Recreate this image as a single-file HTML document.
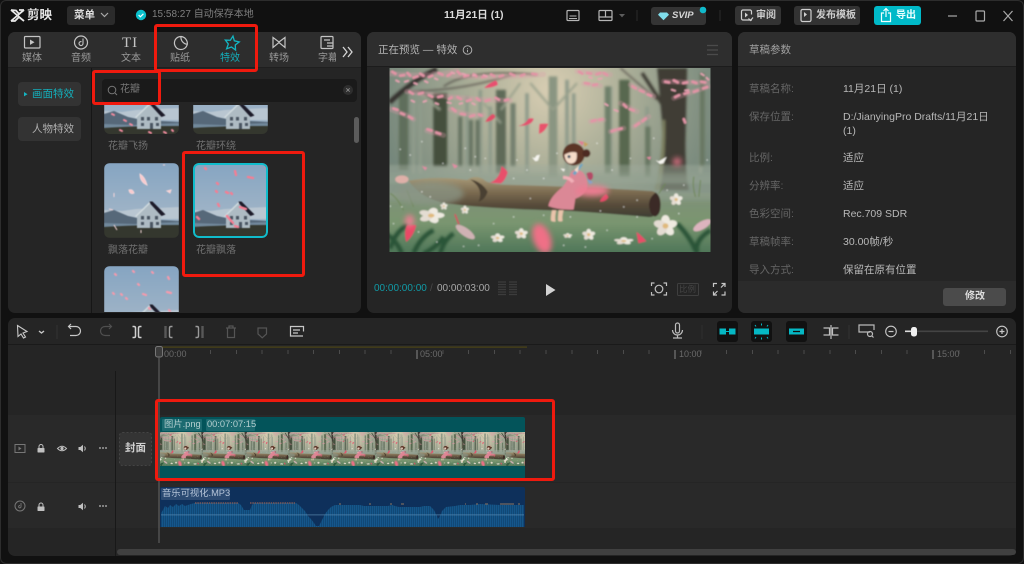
<!DOCTYPE html>
<html><head><meta charset="utf-8"><style>
*{margin:0;padding:0;box-sizing:border-box}
html,body{width:1024px;height:564px;overflow:hidden;background:#111}
body{position:relative;font-family:"Liberation Sans","Noto Sans CJK SC",sans-serif;color:#bbb}
#root{position:absolute;left:0;top:0;width:1024px;height:564px;filter:blur(.35px)}
.a{position:absolute}
.t{position:absolute;white-space:nowrap;line-height:1}
.p{position:absolute;background:#252525;border-radius:7px;overflow:hidden}
.l{color:#666;font-size:10.5px}.v{color:#b8b8b8;font-size:10.5px}
.tab{position:absolute;top:53.5px;font-size:10px;color:#999;width:50px;text-align:center;line-height:1}
.th{position:absolute;width:75px;height:75px;border-radius:6px;overflow:hidden}
.th svg,.cr svg{filter:blur(.55px)}
.cr{position:absolute;overflow:hidden}
.red{position:absolute;border:3px solid #ef1a0e;border-radius:3px}
#root>svg,.th>svg,.cr>svg{position:absolute;left:0;top:0}
.i{fill:none;stroke:#b5b5b5;stroke-width:1.2}
</style></head><body><div id="root">

<div class="a" style="left:0;top:0;width:1024px;height:564px;background:#111;border:1px solid #2d2d2d;border-radius:6px"></div>

<!-- panels -->
<div class="p" style="left:8px;top:32px;width:353px;height:281px">
  <div class="a" style="left:0;top:0;width:353px;height:36px;background:#2d2d2d;border-bottom:1px solid #1f1f1f"></div>
  <div class="a" style="left:83px;top:36px;width:1px;height:245px;background:#161616"></div>
</div>
<div class="p" style="left:367px;top:32px;width:365px;height:281px">
  <div class="a" style="left:0;top:0;width:365px;height:35px;background:#2e2e2e;border-bottom:1px solid #1c1c1c"></div>
</div>
<div class="p" style="left:738px;top:32px;width:278px;height:281px">
  <div class="a" style="left:0;top:0;width:278px;height:35px;background:#2e2e2e;border-bottom:1px solid #1c1c1c"></div>
  <div class="a" style="left:0;top:249px;width:278px;height:32px;background:#2b2b2b"></div>
</div>
<div class="p" style="left:8px;top:318px;width:1008px;height:238px">
  <div class="a" style="left:0;top:26px;width:1008px;height:1px;background:#1a1a1a"></div>
  <div class="a" style="left:0;top:97px;width:1008px;height:67px;background:#292929"></div>
  <div class="a" style="left:0;top:165px;width:1008px;height:45px;background:#292929"></div>
  <div class="a" style="left:107px;top:53px;width:1px;height:185px;background:#181818"></div>
</div>

<!-- left sidebar -->
<div class="a" style="left:18px;top:82px;width:63px;height:24px;background:#333;border-radius:4px"></div>
<div class="a" style="left:18px;top:117px;width:63px;height:24px;background:#333;border-radius:4px"></div>
<div class="a" style="left:102px;top:79px;width:255px;height:23px;background:#1a1a1a;border-radius:4px"></div>
<div class="a" style="left:354px;top:117px;width:5px;height:26px;background:#5c5c5c;border-radius:3px"></div>

<!-- main svg layer -->
<svg width="1024" height="564" viewBox="0 0 1024 564">
<defs>
  <filter id="b1" x="-5%" y="-5%" width="110%" height="110%"><feGaussianBlur stdDeviation="3.5"/></filter>
  <filter id="b2" x="-40%" y="-40%" width="180%" height="180%"><feGaussianBlur stdDeviation="8"/></filter>
  <filter id="b4" x="-2%" y="-2%" width="104%" height="104%"><feGaussianBlur stdDeviation="2"/></filter>
  <radialGradient id="sky" gradientUnits="userSpaceOnUse" cx="540" cy="90" r="520">
    <stop offset="0" stop-color="#d9ceb3"/><stop offset=".4" stop-color="#b0b29b"/><stop offset="1" stop-color="#75877b"/>
  </radialGradient>
  <linearGradient id="gnd" x1="0" y1="0" x2="0" y2="1"><stop offset="0" stop-color="#7f9078"/><stop offset=".45" stop-color="#7a9670"/><stop offset="1" stop-color="#456f53"/></linearGradient>
  <linearGradient id="logG" x1="0" y1="0" x2="0" y2="1"><stop offset="0" stop-color="#a99b79"/><stop offset=".35" stop-color="#7f6f54"/><stop offset=".7" stop-color="#574b3a"/><stop offset="1" stop-color="#3e3e33"/></linearGradient>
  <linearGradient id="hSky" x1="0" y1="0" x2="0" y2="1"><stop offset="0" stop-color="#86a5c2"/><stop offset=".6" stop-color="#9cb2c6"/></linearGradient>
  <g id="fl">
    <ellipse cx="0" cy="-12" rx="9" ry="13" fill="#eeeae0"/>
    <ellipse cx="0" cy="-12" rx="9" ry="13" fill="#eeeae0" transform="rotate(72)"/>
    <ellipse cx="0" cy="-12" rx="9" ry="13" fill="#eeeae0" transform="rotate(144)"/>
    <ellipse cx="0" cy="-12" rx="9" ry="13" fill="#e4dcd2" transform="rotate(216)"/>
    <ellipse cx="0" cy="-12" rx="9" ry="13" fill="#e4dcd2" transform="rotate(288)"/>
    <circle r="6" fill="#dfb97c"/>
  </g>
  <g id="house">
    <rect width="75" height="75" fill="url(#hSky)"/>
    <path d="M0 47l18 1l14-2l43-2v12H0z" fill="#b9c6d1"/>
    <path d="M0 50l10-3l14 6l14 3l37 2v10H0z" fill="#566879"/>
    <path d="M0 60l30 1l45-2v7H0z" fill="#71889b"/>
    <path d="M0 64q30-2 75-2v13H0z" fill="#34372e"/>
    <path d="M33 53l13-12l11 11v13H33z" fill="#aebbc3"/>
    <path d="M31 53l14.500-14 1.200 1-14.500 14z" fill="#cfd9dd"/>
    <path d="M45.500 38.500h3l13 13-4 1.500-11-12z" fill="#1c1a28"/>
    <path d="M37 53h3v3.500h-3zM43 53h3v3.500h-3zM51 53h3v3.500h-3zM37 59h3v3h-3zM52 59h3v3h-3zM46 59h3v6h-3z" fill="#4a5561"/>
  </g>
  <g id="scene"><g filter="url(#b4)">
    <rect x="30" y="0" width="1020" height="600" fill="url(#sky)"/>
    <g filter="url(#b1)">
      <path d="M130 120V340M150 130V340M290 110V340M330 90V340M360 140V340M470 100V340M590 60V340M610 100V340M720 80V340M830 140V360M990 60V340" stroke="#8f9b8b" stroke-width="11"/>
      <path d="M100 100V330" stroke="#5f6e5b" stroke-width="28"/>
      <path d="M210 100V320" stroke="#454f3e" stroke-width="42"/>
      <path d="M270 170V320M302 180V320M322 180V320" stroke="#677563" stroke-width="13"/>
      <path d="M392 90V340" stroke="#5e6a59" stroke-width="30"/>
      <path d="M428 130V320" stroke="#74806e" stroke-width="16"/>
      <path d="M548 50V350" stroke="#8a9582" stroke-width="26"/>
      <path d="M548 150L480 70M548 150L620 70M392 190L340 130M392 150L450 70M210 150L150 100" stroke="#98a08c" stroke-width="6" fill="none"/>
      <path d="M712 80V340" stroke="#70806b" stroke-width="18"/>
      <path d="M762 60V350" stroke="#586850" stroke-width="32"/>
      <path d="M832 200V350M995 40V320" stroke="#697864" stroke-width="16"/>
      <path d="M852 390q28-90 22-210L860 25H950L945 250q0 90 10 140z" fill="#3f3c36"/>
      <path d="M852 390q24-90 24-210l8 0q2 130-16 210z" fill="#7d8060"/>
      <path d="M880 140L815 40" stroke="#3f3c36" stroke-width="11"/>
      <path d="M58 128Q130 60 200 28" stroke="#35302e" stroke-width="15" fill="none"/>
      <path d="M100 95Q280 95 440 40M200 125L150 95M220 80Q300 25 500 45M750 25L860 120" stroke="#4a423d" stroke-width="3.500" fill="none"/>
      <rect x="30" y="315" width="1020" height="55" fill="#a1ad9e" opacity=".45"/>
    </g>
    <g stroke-linecap="round" fill="none">
      <path d="M60 42Q200 55 260 32M190 42Q320 60 520 44M110 95Q300 122 420 122M60 148Q110 165 130 178M170 212L220 226M240 148Q300 172 340 165M640 72L690 78M620 35L720 45M660 185L700 180M790 200L835 170M720 215L760 205M750 130L800 155M780 75L850 110M880 65L1010 70M910 115L1015 80" stroke="#df9dab" stroke-width="15" opacity=".3"/>
      <path d="M66 36l10 6M90 48l12-2M112 40l8 8M130 54l12-4M150 42l10 6M176 52l10-4M205 40l12 5M232 48l10-6M262 36l8 7M282 50l12-3M310 44l8 6M336 52l12-2M362 44l10 5M388 50l10-3M420 42l12 5M452 48l10-4M486 42l12 2M118 96l10 6M146 102l12-3M176 106l10 5M204 112l12-3M236 118l8-5M262 112l10 6M290 124l12-4M320 116l8 6M346 124l12-4M376 114l10 6M404 122l10-3M70 146l12 4M92 160l10 4M116 170l10 6M172 208l12 4M198 218l12 4M246 146l10 8M272 162l12 2M300 170l12-4M326 164l8 3M626 36l10 6M650 40l12 2M678 44l12-4M700 40l10 6M644 70l12 2M668 76l12-2M760 134l8 8M778 148l12 4M664 184l12-3M686 180l10-2M794 198l12-8M816 184l10-8M724 214l12-4M744 208l10-2M786 80l10 6M808 92l12 4M832 104l10 4M884 66l12 2M910 62l12 6M938 70l12-2M966 66l12 4M992 66l12 2M914 112l12-6M942 102l12-4M970 96l12-4M998 86l12-4M940 178l4 10" stroke="#e394a6" stroke-width="8"/>
      <path d="M78 62l8 4M104 66l10-3M132 70l8 3M164 64l8 4M194 56l8 3M244 38l8 3M276 42l10 3M308 48l8-3M340 46l10 4M124 122l8 4M160 126l8-3M196 130l8 3M232 128l10 2M268 132l8-2M306 130l8 4M704 132l8 5M732 150l10 4M656 52l8 3M684 58l10-2M904 90l10 3M944 92l10-1M992 42l8 5M1008 54l6 6" stroke="#e9a3b3" stroke-width="5.500"/>
    </g>
    <rect x="30" y="398" width="1020" height="200" fill="url(#gnd)"/>
    <rect x="30" y="340" width="1020" height="80" fill="#93a191" opacity=".6" filter="url(#b2)"/>
    <path d="M60 565q14-50 52-70M130 580q20-50 60-70M210 580q10-40 40-60M920 490q40 40 60 90M980 580q-10-40 40-70M45 520q35 20 50 60M160 580q40-20 60-50" stroke="#2a5439" stroke-width="14" fill="none" filter="url(#b1)"/>
    <path d="M970 350q-5 30 5 60M990 360l-5 50M885 370l-20 30M60 400q20 10 40 50M110 390l20 50" stroke="#6f8758" stroke-width="3" fill="none"/>
    <path d="M115 362Q200 347 290 360Q315 343 340 358Q352 372 400 374Q640 380 845 393Q872 400 870 435Q860 475 830 470Q700 458 600 452Q350 445 250 432Q160 425 115 362z" fill="url(#logG)"/>
    <path d="M856 397q-22 16-20 40q3 28 18 32q16-6 16-32q0-30-14-40z" fill="#3a2c26"/>
    <path d="M300 358Q335 365 352 395Q345 418 325 425Q342 385 300 358z" fill="#4a3f30"/>
    <ellipse cx="180" cy="400" rx="100" ry="36" fill="#8a9585" opacity=".75" filter="url(#b2)"/>
    <path d="M545 450q-5 22-3 32q8 4 14 2q-3-14 2-34zM565 450q-3 22-2 32q8 4 14 0q-3-12 3-32z" fill="#eac4ab"/>
    <path d="M603 335q-12 28-26 45q-40 32-43 58q30 12 76 10l5-32q30-12 36-35q3-25-12-43q-20-16-36-3z" fill="#db8896"/>
    <path d="M606 340l28-30l4 4l-24 32z" fill="#6ba5c4"/>
    <path d="M612 330l14-14l-4 22z" fill="#f6dcc9"/>
    <path d="M648 340q20-10 20 8q0 14-14 12z" fill="#b44a66"/>
    <path d="M650 355l18 12l-10 6z" fill="#7ea4cf"/>
    <path d="M578 352q20 0 30 14" stroke="#f2b0b8" stroke-width="10" fill="none"/>
    <circle cx="610" cy="283" r="33" fill="#5c3528"/>
    <circle cx="648" cy="280" r="12" fill="#4d2c22"/>
    <path d="M582 284q22-12 37-6q4 30-16 33q-18 0-21-27z" fill="#f5dbc8"/>
    <circle cx="596" cy="290" r="4.500" fill="#33495c"/>
    <path d="M622 242l18 4l-4 12z" fill="#e17b94"/>
    <path d="M640 245l14 8l-12 8z" fill="#c9a058"/>
    <use href="#fl" transform="translate(183 466) scale(1.600 .95) rotate(15)"/>
    <use href="#fl" transform="translate(885 497) scale(1.450 1.300)"/>
    <use href="#fl" transform="translate(453 520) scale(.8 .65)"/>
    <use href="#fl" transform="translate(382 533) scale(.85 .55)"/>
    <use href="#fl" transform="translate(655 523) scale(.8 .7)"/>
    <use href="#fl" transform="translate(917 418) scale(.8 .75)"/>
    <use href="#fl" transform="translate(284 449) scale(.5)"/>
    <use href="#fl" transform="translate(221 438) scale(.45)"/>
    <use href="#fl" transform="translate(592 526) scale(.55 .3)"/>
    <use href="#fl" transform="translate(760 542) scale(1.200 .45)"/>
    <ellipse cx="285" cy="515" rx="34" ry="12" fill="#cfb2b4" transform="rotate(35 285 515)"/>
    <ellipse cx="995" cy="495" rx="30" ry="12" fill="#dcb4be" transform="rotate(-30 995 495)"/>
    <ellipse cx="95" cy="358" rx="20" ry="12" fill="#deb0a8"/>
    <path d="M358 368q30-10 36-50q18 14 18 20q-8 24-20 32z" fill="#e84f6b"/>
    <path d="M443 198q22-4 32-22q16-2 15 2q-8 22-47 20z" fill="#e4506e"/>
    <path d="M506 222q0-20 2-30q16-2 26 0q-10 24-28 30z" fill="#e8526c"/>
    <path d="M342 84q14-14 34-22q8 6 6 14q-20 10-40 8z" fill="#e85070"/>
    <path d="M345 186q6-14 22-24q8 2 8 10q-10 14-30 14z" fill="#e14d68"/>
    <path d="M108 545q-8-30 2-50q20-2 28 0q-6 30-30 50z" fill="#e94a66"/>
    <path d="M688 425q4-14 20-24l6 10q-6 14-26 14z" fill="#e44a68"/>
    <path d="M254 462l12 30" stroke="#e3405e" stroke-width="4"/>
    <path d="M798 515q12 8 30 28l-24 6z" fill="#e84d68"/>
    <path d="M155 318l16 5l-6 8zM245 310l18 8l-10 8zM828 292l14-2l-4 10z" fill="#e58aa4"/>
    <g filter="url(#b2)">
      <ellipse cx="515" cy="535" rx="26" ry="46" fill="#ef6f86" transform="rotate(-20 515 535)"/>
      <ellipse cx="665" cy="392" rx="50" ry="16" fill="#ec7d92"/>
      <circle cx="920" cy="305" r="13" fill="#d36f80"/>
      <ellipse cx="118" cy="482" rx="14" ry="18" fill="#ea7f92"/>
    </g>
    <path d="M485 292l8 2l6-8l10-2l-6 18l-8 2zM855 300l10 4l10-6l14-8l-10 20l-10 2zM570 325l14 2l-4 8z" fill="#f6f5f0"/>
    <path d="M90 268h0M120 285h0M155 245h0M218 310h0M285 265h0M315 290h0M345 295h0M440 300h0M470 330h0M520 355h0M560 280h0M680 250h0M725 330h0M780 295h0M850 235h0M890 390h0M940 375h0M1010 300h0M155 395h0M95 440h0M60 438h0M180 410h0M370 490h0M430 470h0M480 415h0M520 465h0M690 452h0M760 440h0M800 420h0M800 470h0M845 535h0M925 460h0M70 490h0M145 515h0M200 545h0M280 558h0M325 555h0M580 555h0M645 560h0M430 355h0M300 330h0M600 470h0M710 510h0" stroke="#fff" stroke-width="3.500" stroke-linecap="round"/>
  </g></g>
  <pattern id="wv" width="2" height="10" patternUnits="userSpaceOnUse"><rect width="1.200" height="10" fill="#15568a"/><rect x="1.200" width=".8" height="10" fill="#114b78"/></pattern>
</defs>

<!-- Preview image -->
<svg x="389.500" y="68" width="321" height="184" viewBox="58 25 962 550" preserveAspectRatio="none"><use href="#scene"/></svg>

<!-- top bar icons -->
<path d="M11 10l5 .5 3 3.500 5-4M11 21h4l4-4 5 4M11 10l13 11M24 10h-5M11 21l13-11" fill="none" stroke="#e8e8e8" stroke-width="1.800"/>
<rect x="67" y="6" width="48" height="19" rx="3" fill="#2b2b2b"/>
<path d="M101 13l3.500 3.500 3.500-3.500" fill="none" stroke="#aaa" stroke-width="1.200"/>
<circle cx="141" cy="15" r="5.200" fill="#0bc0cc"/><path d="M138.600 15l1.800 1.800 3-3" fill="none" stroke="#fff" stroke-width="1.200"/>
<g class="i"><rect x="567" y="10.500" width="12" height="10" rx="1"/><path d="M569.500 16h7M569 18.500h8" stroke-width=".9"/></g>
<g class="i"><rect x="599" y="10.500" width="13" height="10" rx="1"/><path d="M599 17h13M605.500 10.500V17"/></g>
<path d="M619 14h6l-3 3.400z" fill="#5d5d5d"/>
<path d="M637 10v11" stroke="#2b2b2b"/><path d="M720 10v11" stroke="#2b2b2b"/>
<rect x="651" y="7" width="55" height="18" rx="3" fill="#343434"/>
<path d="M660 12.500h7l2 2.300-5.500 5.400-5.500-5.400z" fill="#7fdcea"/>
<circle cx="703" cy="10" r="3.300" fill="#10bacb"/>
<rect x="735" y="6" width="46" height="19" rx="3" fill="#333"/>
<rect x="794" y="6" width="66" height="19" rx="3" fill="#333"/>
<rect x="874" y="6" width="47" height="19" rx="3" fill="#00b9c8"/>
<g fill="none" stroke="#d0d0d0" stroke-width="1.200"><path d="M752 20h-9a1.500 1.500 0 0 1-1.500-1.500v-7a1.500 1.500 0 0 1 1.500-1.500h7a1.500 1.500 0 0 1 1.500 1.500v3"/><path d="M745 12.500l3 2.500-3 2.500z" fill="#d0d0d0" stroke="none"/><path d="M748.500 18.500l2 2 2.500-3"/></g>
<g fill="none" stroke="#d0d0d0" stroke-width="1.200"><rect x="801" y="9.500" width="10" height="12" rx="1.500"/><path d="M804 12l3 2.500-3 2.500z" fill="#d0d0d0" stroke="none"/></g>
<g fill="none" stroke="#f0ffff" stroke-width="1.200"><path d="M884 13h-2.500v8.500h9V13H888M886 17V9M883.500 11l2.500-2.500 2.500 2.500"/></g>
<path d="M948 16h9" stroke="#aaa" stroke-width="1.200"/>
<rect x="976" y="11" width="8.500" height="10" rx="1" fill="none" stroke="#aaa" stroke-width="1.200"/>
<path d="M1003.500 11l9 10M1012.500 11l-9 10" stroke="#aaa" stroke-width="1.200"/>

<!-- tab icons -->
<g fill="none" stroke="#c4c4c4" stroke-width="1.200">
  <rect x="24.500" y="36.500" width="15.500" height="11.500" rx="1"/><path d="M30 39.500l4.500 2.700-4.500 2.700z" fill="#c4c4c4" stroke="none"/>
  <circle cx="81" cy="42.500" r="6.500"/><path d="M83 38.500v5a2 2 0 1 1-1.500-1.900" stroke-width="1.100"/>
  <path d="M181 36.500a6.500 6.500 0 1 0 6.300 7.800a7 7 0 0 1-6.300-7.800zM181 36.500a7 7 0 0 1 6.300 7.800"/>
  <path d="M273 37.500l6 4.500 6-4.500v10l-6-5-6 5z"/>
  <rect x="321" y="36.500" width="12" height="12" rx="1"/><path d="M324 40h6M327 43h6M327 46h6"/>
</g>
<path d="M232 36l2 4.500 5 .5-3.500 3.500 1 5-4.500-2.500-4.500 2.500 1-5-3.500-3.500 5-.5z" fill="none" stroke="#13b5c2" stroke-width="1.300" transform="rotate(8 232 43)"/>
<path d="M343 47l4 5-4 5M348 47l4 5-4 5" fill="none" stroke="#d5d5d5" stroke-width="1.300"/>
<path d="M24 92l3.500 2.200L24 96.400z" fill="#14b5c2"/>
<circle cx="112" cy="90" r="3.800" fill="none" stroke="#777" stroke-width="1"/><path d="M115 93l2 2" stroke="#777"/>
<circle cx="348" cy="90" r="5" fill="#2e2e2e"/><path d="M346.300 88.300l3.400 3.400M349.700 88.300l-3.400 3.400" stroke="#888" stroke-width=".9"/>

<!-- preview header and controls -->
<circle cx="467.500" cy="50" r="4.300" fill="none" stroke="#aaa" stroke-width="1"/><path d="M467.500 48v.8M467.500 49.800v2.500" stroke="#aaa"/>
<path d="M707 45.500h11M707 50h11M707 54.500h11" stroke="#4b4b4b" stroke-width="1.300"/>
<path d="M498 282h8M498 284.500h8M498 287h8M498 289.500h8M498 292h8M498 294.500h8M509 282h8M509 284.500h8M509 287h8M509 289.500h8M509 292h8M509 294.500h8" stroke="#3c3c3c" stroke-width="1.200"/>
<path d="M546 284l9.500 6-9.500 6z" fill="#d2d2d2"/>
<g fill="none" stroke="#c0c0c0" stroke-width="1.200"><path d="M651.500 286v-3h3M663.500 283h3v3M666.500 292v3h-3M654.500 295h-3v-3"/><circle cx="659" cy="289" r="3.800"/></g>
<rect x="677.500" y="283.500" width="21" height="12" rx="1" fill="none" stroke="#3f3f3f"/>
<g fill="none" stroke="#c8c8c8" stroke-width="1.200"><path d="M713.500 287v-3.500h3.500M721.500 283.500h3.500V287M725 291.500V295h-3.500M717 295h-3.500v-3.500M714 294.500l3.500-3.500M724.500 284l-3.500 3.500"/></g>
<rect x="943" y="288" width="63" height="18" rx="3" fill="#4b4b4b"/>

<!-- timeline toolbar -->
<g fill="none" stroke="#c8c8c8" stroke-width="1.200">
  <path d="M17.500 325.500l9.500 6-4 1.500 2.500 4-2 1-2.500-4-3 2.500z" stroke-width="1.100"/>
  <path d="M39 331l2.500 2 2.500-2" stroke-width="1.400"/>
  <path d="M71 329l-2.500-2.500L71 324M69 326.500h7a4 4 0 0 1 0 9h-6"/>
  <path stroke="#4f4f4f" d="M109 329l2.500-2.500L109 324M111 326.500h-6a4 4 0 0 0 0 9h5"/>
  <path d="M132.500 326.500h1.500q1.500 0 1.500 1.500v8q0 1.500-1.500 1.500h-1.500M141.500 326.500H140q-1.500 0-1.500 1.500v8q0 1.500 1.500 1.500h1.500" stroke="#d0d0d0" stroke-width="1.500"/>
  <path d="M165.500 326.500v11" stroke="#8a8a8a" stroke-width="2.400" stroke-dasharray="1 1"/>
  <path d="M172.500 326.500H171q-1.500 0-1.500 1.500v8q0 1.500 1.500 1.500h1.500" stroke="#9a9a9a" stroke-width="1.400"/>
  <path d="M195.500 326.500h1.500q1.500 0 1.500 1.500v8q0 1.500-1.500 1.500h-1.500" stroke="#9a9a9a" stroke-width="1.400"/>
  <path d="M202.500 326.500v11" stroke="#8a8a8a" stroke-width="2.400" stroke-dasharray="1 1"/>
  <path d="M226 328h10M227.500 328v9.500h7V328M229 328v-2h4v2" stroke="#555"/>
  <path d="M258 328h8.500v6l-4.300 3.800-4.200-3.800z" stroke="#555"/>
  <path d="M303 336h-12.500v-9.500h13v5M293 330h7M293 333h5"/>
  <path d="M675.500 325a2 2 0 0 1 4 0v6a2 2 0 0 1-4 0zM672.500 330a5 5 0 0 0 10 0M677.500 335v2.500M673 338h9" stroke="#bbb"/>
  <path d="M831 325v14M823.500 328h6v7h-6M838.500 328h-6v7h6" stroke="#c0c0c0"/>
  <path d="M870 332h-11v-7h15v5" stroke="#bbb"/><circle cx="870" cy="334" r="2.500" stroke="#bbb"/><path d="M872 336l1.500 1.500" stroke="#bbb"/>
  <circle cx="891" cy="331.500" r="5.300" stroke-width="1.100"/><path d="M888.500 331.500h5"/>
  <circle cx="1002" cy="331.500" r="5.300" stroke-width="1.100"/><path d="M999.500 331.500h5M1002 329v5"/>
</g>
<path d="M57 325v14M849 325v14" stroke="#333"/><path d="M702 325v14" stroke="#303030"/>
<rect x="717" y="321" width="21" height="21" rx="3" fill="#111"/><rect x="751" y="321" width="21" height="21" rx="3" fill="#111"/><rect x="786" y="321" width="21" height="21" rx="3" fill="#111"/>
<g fill="#05b8c4"><rect x="719.500" y="328.500" width="6.500" height="6"/><rect x="729" y="328.500" width="6.500" height="6"/><rect x="754" y="328.500" width="15" height="6"/><rect x="789" y="328.500" width="15" height="6"/></g>
<path d="M726 331.500h3M761.500 323.500v2M761.500 337.500v2M755 325l1 1.500M768 325l-1 1.500M755 338.500l1-1.500M768 338.500l-1-1.500" stroke="#05b8c4"/>
<path d="M793 331.500h7" stroke="#111" stroke-width="1.300"/>
<rect x="905" y="330.500" width="83" height="1.600" fill="#444"/><rect x="905" y="330.500" width="8" height="1.600" fill="#ddd"/>
<rect x="911" y="327" width="6" height="9.500" rx="2.500" fill="#f0f0f0"/>

<!-- ruler -->
<rect x="160" y="346.500" width="367" height="1.200" fill="#4d4516"/>
<path d="M417 350v9M675 350v9M933 350v9" stroke="#777" stroke-width="1.200"/>
<path d="M210.500 350v4M236.500 350v4M262 350v4M288 350v4M313.500 350v4M339.500 350v4M365 350v4M391 350v4M443 350v4M468.500 350v4M494.500 350v4M520 350v4M546 350v4M572 350v4M597.500 350v4M623.500 350v4M649 350v4M701 350v4M726.500 350v4M752.500 350v4M778 350v4M804 350v4M830 350v4M855.500 350v4M881.500 350v4M907 350v4M959 350v4M984.500 350v4M1010.500 350v4" stroke="#4c4c4c"/>
<rect x="155.500" y="346.500" width="7" height="10.500" rx="2" fill="#3c3c3c" stroke="#777"/>
<path d="M159 357v186" stroke="#5d5d5d" stroke-width="1.200"/>

<!-- track head icons -->
<g fill="none" stroke="#777" stroke-width="1"><rect x="15" y="444.500" width="10" height="8"/></g><path d="M18.500 446.500l3 2-3 2z" fill="#777"/>
<circle cx="20" cy="506" r="5" fill="none" stroke="#777"/><path d="M21 503v3.500a1.200 1.200 0 1 1-1-1" fill="none" stroke="#777" stroke-width=".9"/>
<g fill="#c0c0c0">
  <rect x="37.500" y="448" width="7" height="4.500" rx=".6"/><rect x="37.500" y="506.500" width="7" height="4.500" rx=".6"/>
  <circle cx="62" cy="448.500" r="1.600"/>
  <path d="M78.500 447v3h1.800l2.700 2.200v-7.400L80.300 447zM78.500 505v3h1.800l2.700 2.200v-7.400L80.300 505z"/>
  <circle cx="100" cy="448" r=".9"/><circle cx="103" cy="448" r=".9"/><circle cx="106" cy="448" r=".9"/>
  <circle cx="100" cy="506" r=".9"/><circle cx="103" cy="506" r=".9"/><circle cx="106" cy="506" r=".9"/>
</g>
<path d="M39 448v-1.500a2 2 0 0 1 4 0V448M39 506.500V505a2 2 0 0 1 4 0v1.500" fill="none" stroke="#c0c0c0"/>
<path d="M57.500 448.500q4.500-4.500 9 0q-4.500 4.500-9 0z" fill="none" stroke="#c0c0c0"/>
<path d="M84.500 446.500q1.500 2 0 4M84.500 504.500q1.500 2 0 4" fill="none" stroke="#c0c0c0"/>
<rect x="119.500" y="432.500" width="32" height="33" rx="3" fill="#343434" stroke="#444" stroke-dasharray="2 2"/>

<!-- video clip -->
<path d="M160 419a2 2 0 0 1 2-2h361a2 2 0 0 1 2 2v59H160z" fill="#03545a"/>
<rect x="162" y="419" width="40" height="12" rx="1" fill="#1c6a70"/><rect x="206" y="419" width="49" height="12" rx="1" fill="#1c6a70"/>
<svg x="160" y="432" width="43.300" height="34" viewBox="194 25 700 550" preserveAspectRatio="none"><use href="#scene"/></svg>
<svg x="203.300" y="432" width="43.300" height="34" viewBox="194 25 700 550" preserveAspectRatio="none"><use href="#scene"/></svg>
<svg x="246.600" y="432" width="43.300" height="34" viewBox="194 25 700 550" preserveAspectRatio="none"><use href="#scene"/></svg>
<svg x="289.900" y="432" width="43.300" height="34" viewBox="194 25 700 550" preserveAspectRatio="none"><use href="#scene"/></svg>
<svg x="333.200" y="432" width="43.300" height="34" viewBox="194 25 700 550" preserveAspectRatio="none"><use href="#scene"/></svg>
<svg x="376.500" y="432" width="43.300" height="34" viewBox="194 25 700 550" preserveAspectRatio="none"><use href="#scene"/></svg>
<svg x="419.800" y="432" width="43.300" height="34" viewBox="194 25 700 550" preserveAspectRatio="none"><use href="#scene"/></svg>
<svg x="463.100" y="432" width="43.300" height="34" viewBox="194 25 700 550" preserveAspectRatio="none"><use href="#scene"/></svg>
<svg x="506.400" y="432" width="18.600" height="34" viewBox="194 25 300 550" preserveAspectRatio="none"><use href="#scene"/></svg>

<!-- audio clip -->
<path d="M160 489a2 2 0 0 1 2-2h361a2 2 0 0 1 2 2v38H160z" fill="#0e305b"/>
<rect x="161" y="488" width="69" height="12" rx="1" fill="#2b4a72"/>
<polygon points="161,527 161,513 163,510 165,506 168,508 170,505 173,507 176,504 179,506 182,504 185,506 188,505 191,504 195,503 238,503 241,505 244,510 250,510 252,505 254,503 296,503 299,505 302,508 305,511 308,516 311,519 314,523 316,526 319,526 322,520 325,514 328,510 331,507 335,505 360,505 364,506 388,506 392,505 395,506 399,507 420,507 424,506 430,506 434,510 437,516 438,519 440,516 442,511 446,507 455,506 460,505 470,505 480,504 500,505 524,505 524,527" fill="url(#wv)"/>
<rect x="161" y="514.500" width="363" height=".8" fill="#5f8fb4" opacity=".8"/>
<path d="M195 503h43M250 503h45" stroke="#8f5e55" stroke-width="1.300" stroke-dasharray="1.500 .8"/>
<path d="M339 504h2M369 504h2M390 504h2M401 504h3M465 504h1M476 504h2M485 504h3M500 504h14M518 504h2" stroke="#75685f" stroke-width="1.200"/>

<!-- bottom scrollbar -->
<rect x="117" y="549" width="899" height="6" rx="3" fill="#404040"/>
</svg>

<!-- effect thumbnails -->
<div class="cr" style="left:104px;top:105px;width:75px;height:29px;border-radius:0 0 6px 6px">
  <svg width="75" height="75" viewBox="0 0 75 75" style="top:-41px"><use href="#house"/><path d="M8 50l2 1M20 56l2 1M16 66l2 1M26 60l2 1M45 68l2 1M60 68l2 1M68 66l1 1" stroke="#f08a9e" stroke-width="2" stroke-linecap="round"/></svg>
</div>
<div class="cr" style="left:193px;top:105px;width:75px;height:29px;border-radius:0 0 6px 6px">
  <svg width="75" height="75" viewBox="0 0 75 75" style="top:-41px"><use href="#house"/></svg>
</div>
<div class="th" style="left:104px;top:163px">
  <svg width="75" height="75" viewBox="0 0 75 75"><use href="#house"/>
  <path d="M36 11q5 3 7 11q-7-3-7-11zM25 27q4-1 5 3q-4 2-5-3zM63 28l4-1l-1 3zM10 30v4M59 2h2M5 46l4 1M10 62l3 5M37 67v3" stroke="#f6d6d8" fill="#f9c9cd" stroke-width="1"/></svg>
</div>
<div class="th" style="left:193px;top:163px">
  <svg width="75" height="75" viewBox="0 0 75 75"><use href="#house"/>
  <path d="M12 5l1 1M42 8l1 4M55 14l5 1M24 20l1 1M73 4l1 1M23 28l1 1M33 29l2 1M38 30l1 1M25 41l1 2M47 44l6 2M34 53l6 7M4 54l2 2M42 63l3 1" stroke="#f47e93" stroke-width="2.400" stroke-linecap="round"/></svg>
  <div class="a" style="left:0;top:0;width:75px;height:75px;border-radius:6px;border:2px solid #10bccb"></div>
</div>
<div class="cr" style="left:104px;top:266px;width:75px;height:46px;border-radius:6px 6px 0 0">
  <svg width="75" height="75" viewBox="0 0 75 75"><use href="#house"/>
  <path d="M29 5l1 1M11 8l1 1M48 6l1 1M34 18l1 1M64 11l1 2M63 26l4 1M9 27l1 1M17 28l1 1M39 28l3 1M22 32l1 1M65 44l1 1M45 42l1 1" stroke="#f49aac" stroke-width="2.200" stroke-linecap="round"/></svg>
</div>

<!-- TEXT -->
<div class="t" style="left:27px;top:9px;font-size:12.500px;font-weight:700;color:#e6e6e6">剪映</div>
<div class="t" style="left:74px;top:10px;font-size:10.500px;font-weight:700;color:#ddd">菜单</div>
<div class="t" style="left:152px;top:10px;font-size:10px;color:#7f7f7f">15:58:27 自动保存本地</div>
<div class="t" style="left:444px;top:10px;font-size:10.500px;font-weight:700;color:#ddd">11月21日 (1)</div>
<div class="t" style="left:672px;top:11px;font-size:9.500px;font-weight:700;font-style:italic;color:#d6d6d6">SVIP</div>
<div class="t" style="left:756px;top:10.500px;font-size:10px;font-weight:700;color:#ccc">审阅</div>
<div class="t" style="left:816px;top:10.500px;font-size:10px;font-weight:700;color:#ccc">发布模板</div>
<div class="t" style="left:896px;top:10.500px;font-size:10px;font-weight:700;color:#eaffff">导出</div>

<div class="tab" style="left:7px">媒体</div>
<div class="tab" style="left:56px">音频</div>
<div class="tab" style="left:106px">文本</div>
<div class="tab" style="left:155px">贴纸</div>
<div class="tab" style="left:205px;color:#14aeba">特效</div>
<div class="tab" style="left:254px">转场</div>
<div class="a" style="left:302px;top:50px;width:34px;height:16px;overflow:hidden"><div class="tab" style="left:16px;top:3.500px;width:24px;text-align:left">字幕</div></div>
<div class="t" style="left:122px;top:36px;font-family:'Liberation Serif',serif;font-size:15px;color:#c4c4c4;letter-spacing:1px">TI</div>

<div class="t" style="left:32px;top:88.500px;font-size:10.500px;color:#14aeba">画面特效</div>
<div class="t" style="left:32px;top:123.500px;font-size:10.500px;color:#b0b0b0">人物特效</div>
<div class="t" style="left:120px;top:85px;font-size:10px;color:#777">花瓣</div>

<div class="t" style="left:108px;top:142px;font-size:10px;color:#707070">花瓣飞扬</div>
<div class="t" style="left:196px;top:142px;font-size:10px;color:#707070">花瓣环绕</div>
<div class="t" style="left:108px;top:246px;font-size:10px;color:#707070">飘落花瓣</div>
<div class="t" style="left:196px;top:246px;font-size:10px;color:#707070">花瓣飘落</div>

<div class="t" style="left:378px;top:45px;font-size:10.500px;color:#b5b5b5">正在预览 — 特效</div>
<div class="t" style="left:374px;top:284px;font-size:10px;color:#119aa6">00:00:00:00</div>
<div class="t" style="left:430px;top:284px;font-size:10px;color:#4b4b4b">/</div>
<div class="t" style="left:437px;top:284px;font-size:10px;color:#a8a8a8">00:00:03:00</div>
<div class="t" style="left:679px;top:285px;font-size:8.500px;color:#454545">比例</div>

<div class="t" style="left:749px;top:45px;font-size:10.500px;color:#a0a0a0">草稿参数</div>
<div class="t l" style="left:749px;top:84px">草稿名称:</div><div class="t v" style="left:843px;top:84px">11月21日 (1)</div>
<div class="t l" style="left:749px;top:112px">保存位置:</div><div class="t v" style="left:843px;top:112px">D:/JianyingPro Drafts/11月21日</div><div class="t v" style="left:843px;top:126px">(1)</div>
<div class="t l" style="left:749px;top:153px">比例:</div><div class="t v" style="left:843px;top:153px">适应</div>
<div class="t l" style="left:749px;top:181px">分辨率:</div><div class="t v" style="left:843px;top:181px">适应</div>
<div class="t l" style="left:749px;top:209px">色彩空间:</div><div class="t v" style="left:843px;top:209px">Rec.709 SDR</div>
<div class="t l" style="left:749px;top:237px">草稿帧率:</div><div class="t v" style="left:843px;top:237px">30.00帧/秒</div>
<div class="t l" style="left:749px;top:265px">导入方式:</div><div class="t v" style="left:843px;top:265px">保留在原有位置</div>
<div class="t" style="left:965px;top:292px;font-size:10px;font-weight:700;color:#ddd">修改</div>

<div class="t" style="left:164px;top:350px;font-size:9px;color:#6a6a6a">00:00</div>
<div class="t" style="left:420px;top:350px;font-size:9px;color:#6a6a6a">05:00</div>
<div class="t" style="left:679px;top:350px;font-size:9px;color:#6a6a6a">10:00</div>
<div class="t" style="left:937px;top:350px;font-size:9px;color:#6a6a6a">15:00</div>

<div class="t" style="left:125px;top:443px;font-size:10.500px;font-weight:700;color:#d0d0d0">封面</div>
<div class="t" style="left:164px;top:420px;font-size:9.300px;color:#b4cfd0">图片.png</div>
<div class="t" style="left:207px;top:420px;font-size:9.300px;color:#b4cfd0">00:07:07:15</div>
<div class="t" style="left:162px;top:489px;font-size:9.300px;color:#b5c4d8">音乐可视化.MP3</div>

<!-- red highlights -->
<div class="red" style="left:154px;top:24px;width:104px;height:48px"></div>
<div class="red" style="left:92px;top:70px;width:69px;height:35px"></div>
<div class="red" style="left:182px;top:151px;width:123px;height:126px"></div>
<div class="red" style="left:155px;top:399px;width:400px;height:82px"></div>

</div></body></html>
